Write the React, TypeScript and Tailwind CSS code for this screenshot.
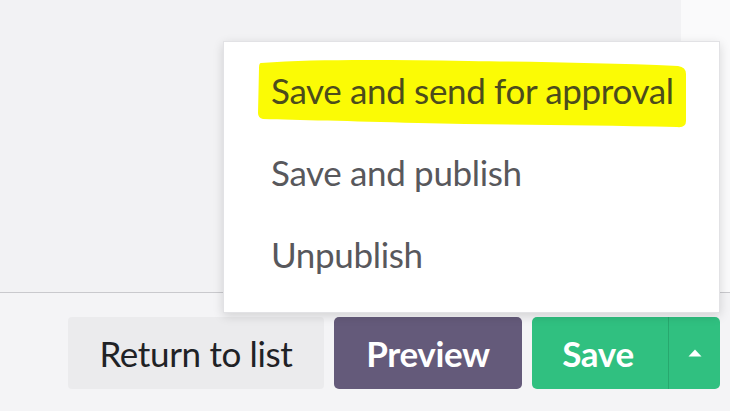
const menuItems = [
  { label: "Save and send for approval", highlighted: true },
  { label: "Save and publish", highlighted: false },
  { label: "Unpublish", highlighted: false },
];

function Highlight() {
  return (
    <svg
      className="pointer-events-none absolute left-[34px] top-[17px] h-[70px] w-[430px]"
      viewBox="0 0 430 70"
    >
      <path
        d="M3 4 C 60 0, 130 1, 210 2 C 290 3, 350 4, 420 7 Q 428 8 428 15 L 428 62 Q 428 69 419 68 C 330 66, 250 66, 160 64 C 90 62, 40 61, 5 60 Q 0 59 0 54 L 1 9 Q 1 4 3 4 Z"
        fill="#fbfb05"
      />
    </svg>
  );
}

function PublishMenu() {
  return (
    <div className="absolute bottom-full right-0 mb-[4px] w-[497px] border border-[#e2e2e5] bg-white pb-[17px] pt-[7px] shadow-[0_3px_10px_rgba(0,0,0,0.14)]">
      <Highlight />
      <ul className="relative">
        {menuItems.map((item) => (
          <li
            key={item.label}
            className={
              item.highlighted
                ? "h-[82px] pl-[47px] leading-[82px] text-[#4c4c1c]"
                : "h-[82px] pl-[47px] leading-[82px] text-[#58585c]"
            }
          >
            {item.label}
          </li>
        ))}
      </ul>
    </div>
  );
}

export default function App() {
  return (
    <div className="flex h-[411px] w-[730px] flex-col overflow-hidden bg-[#f4f4f6] font-['Lato',sans-serif] text-[35px] tracking-[-0.35px]">
      <div className="flex h-[293px] border-b border-[#c9c9cd]">
        <div className="flex-1 bg-[#f2f2f4]" />
        <div className="w-[49px] bg-[#fafafb]" />
      </div>

      <div className="flex justify-end pr-[10px] pt-[24px]">
        <div className="relative flex gap-[10px]">
          <PublishMenu />

          <button className="flex h-[72px] w-[256px] items-center justify-center rounded-[4px] bg-[#ebebed] text-[#1f2226]">
            Return to list
          </button>

          <button className="flex h-[72px] w-[188px] items-center justify-center rounded-[5px] bg-[#645a7a] font-bold text-white">
            Preview
          </button>

          <div className="flex h-[72px] w-[188px] overflow-hidden rounded-[5px] bg-[#30c080] text-white">
            <button className="flex flex-1 items-center justify-center pr-[4px] font-bold">
              Save
            </button>
            <button className="flex w-[52px] items-center justify-center border-l border-[#27a86e]">
              <svg width="14" height="8" viewBox="0 0 14 8">
                <path d="M7 0.5 L13.5 7.5 L0.5 7.5 Z" fill="white" />
              </svg>
            </button>
          </div>
        </div>
      </div>
    </div>
  );
}
